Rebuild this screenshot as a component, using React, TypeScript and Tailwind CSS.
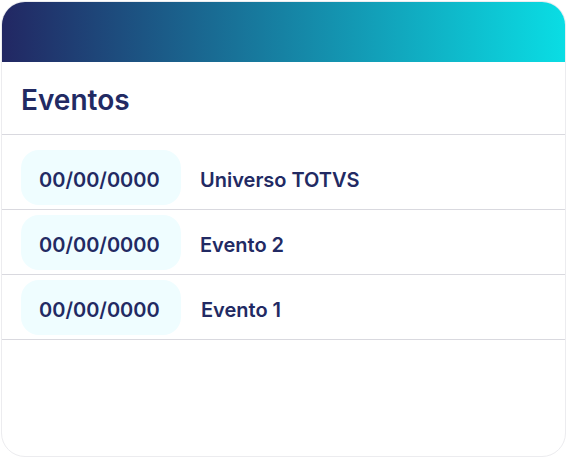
export default function App() {
  const eventos = [
    { data: "00/00/0000", nome: "Universo TOTVS" },
    { data: "00/00/0000", nome: "Evento 2" },
    { data: "00/00/0000", nome: "Evento 1", offset: true },
  ];

  return (
    <div className="w-[567px] h-[458px] bg-white p-px font-['Inter',sans-serif]">
      <div className="h-full overflow-hidden rounded-[24px] border border-[#ececef] bg-white">
        <div className="h-[60px] bg-[linear-gradient(90deg,#222763,#0adde4)]" />
        <div className="h-[73px] border-b border-[#d9d9df] px-[19px] pt-[20px]">
          <h1 className="text-[28px] font-semibold leading-[36px] text-[#222a63]">Eventos</h1>
        </div>
        <ul className="pt-[10px]">
          {eventos.map((e, i) => (
            <li key={i} className="flex items-center border-b border-[#d9d9df] pt-[5px] pb-[4px] pl-[19px]">
              <span className="flex h-[55px] w-[160px] items-center rounded-[18px] bg-[#effdff] pl-[18px] pt-[4px] text-[20px] font-semibold text-[#222a63]">
                {e.data}
              </span>
              <span
                className={
                  e.offset
                    ? "ml-[20px] mt-[5px] text-[20px] font-semibold text-[#222a63]"
                    : "ml-[19px] mt-[5px] text-[20px] font-semibold text-[#222a63]"
                }
              >
                {e.nome}
              </span>
            </li>
          ))}
        </ul>
      </div>
    </div>
  );
}
